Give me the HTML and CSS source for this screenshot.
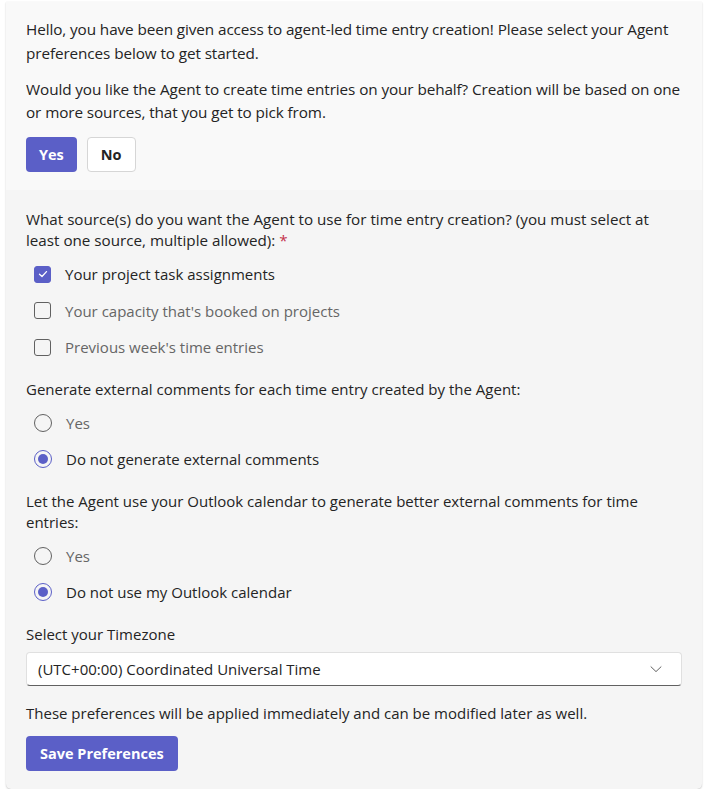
FILE: index.html
```html
<!DOCTYPE html>
<html>
<head>
<meta charset="utf-8">
<link rel="stylesheet" href="styles.css">
</head>
<body>
<div class="card">
  <section class="intro">
    <p class="para">Hello, you have been given access to agent-led time entry creation! Please select your Agent preferences below to get started.</p>
    <p class="para">Would you like the Agent to create time entries on your behalf? Creation will be based on one or more sources, that you get to pick from.</p>
    <div class="toggle">
      <button class="btn primary">Yes</button>
      <button class="btn secondary">No</button>
    </div>
  </section>
  <section class="form">
    <div class="field">
      <div class="label">What source(s) do you want the Agent to use for time entry creation? (you must select at least one source, multiple allowed): <span class="req">*</span></div>
      <div class="opts">
        <div class="opt checked">
          <span class="box on"><svg width="12" height="12" viewBox="0 0 12 12"><path d="M2.5 6.2 L5 8.5 L9.5 3.6" fill="none" stroke="#fff" stroke-width="1.3" stroke-linecap="round" stroke-linejoin="round"/></svg></span>
          <span class="txt">Your project task assignments</span>
        </div>
        <div class="opt">
          <span class="box"></span>
          <span class="txt">Your capacity that's booked on projects</span>
        </div>
        <div class="opt">
          <span class="box"></span>
          <span class="txt">Previous week's time entries</span>
        </div>
      </div>
    </div>
    <div class="field">
      <div class="label">Generate external comments for each time entry created by the Agent:</div>
      <div class="opts">
        <div class="opt">
          <span class="radio"></span>
          <span class="txt">Yes</span>
        </div>
        <div class="opt checked">
          <span class="radio on"></span>
          <span class="txt">Do not generate external comments</span>
        </div>
      </div>
    </div>
    <div class="field">
      <div class="label">Let the Agent use your Outlook calendar to generate better external comments for time entries:</div>
      <div class="opts">
        <div class="opt">
          <span class="radio"></span>
          <span class="txt">Yes</span>
        </div>
        <div class="opt checked">
          <span class="radio on"></span>
          <span class="txt">Do not use my Outlook calendar</span>
        </div>
      </div>
    </div>
    <div class="field tz">
      <div class="label">Select your Timezone</div>
      <div class="select">
        <span>(UTC+00:00) Coordinated Universal Time</span>
        <svg width="14" height="14" viewBox="0 0 14 14"><path d="M2 4.8 L7 9.6 L12 4.8" fill="none" stroke="#616161" stroke-width="1" stroke-linecap="round" stroke-linejoin="round"/></svg>
      </div>
    </div>
    <p class="note">These preferences will be applied immediately and can be modified later as well.</p>
    <div class="actions">
      <button class="btn primary save">Save Preferences</button>
    </div>
  </section>
</div>
</body>
</html>
```
FILE: styles.css
```css
* { box-sizing: border-box; }
html, body { margin: 0; padding: 0; background: #ffffff; }
body {
  font-family: "Open Sans", "Noto Sans", sans-serif;
  font-size: 15px;
  color: #242424;
  padding: 2px 20px 0 6px;
}
.card {
  background: #f5f5f5;
  border-radius: 0 0 5px 5px;
  box-shadow: 0 1px 2px rgba(0,0,0,0.16), 0 0 1px rgba(0,0,0,0.14);
  overflow: hidden;
}
.intro {
  background: #f9f9f9;
  padding: 16px 20px 18px 20px;
}
.para {
  margin: 0 0 12.5px 0;
  line-height: 23.5px;
  font-size: 15.3px;
  letter-spacing: -0.1px;
}
.toggle { display: flex; gap: 10px; }
.btn {
  font-family: inherit;
  font-size: 14.5px;
  font-weight: 700;
  height: 35px;
  border-radius: 4px;
  cursor: pointer;
  padding: 0 13px;
}
.primary { background: #5b5fc7; color: #fff; border: none; }
.secondary { background: #fff; color: #242424; border: 1px solid #d6d6d6; }
.form {
  padding: 19px 20px 18px 20px;
  display: flex;
  flex-direction: column;
}
.field { margin-bottom: 13px; }
.label { line-height: 21px; margin-bottom: 5px; }
.field:first-child .label { font-size: 15.2px; }
.req { color: #c4314b; }
.opts { display: flex; flex-direction: column; }
.opt {
  height: 36.5px;
  display: flex;
  align-items: center;
  padding-left: 8px;
  gap: 14px;
  color: #666666;
}
.opt.checked { color: #242424; }
.box {
  width: 17px; height: 17px;
  border: 1px solid #616161;
  border-radius: 3px;
  display: flex; align-items: center; justify-content: center;
  flex: none;
}
.box.on { background: #5b5fc7; border-color: #5b5fc7; }
.radio {
  width: 18px; height: 18px;
  border: 1px solid #616161;
  border-radius: 50%;
  flex: none;
  display: flex; align-items: center; justify-content: center;
}
.radio.on { border-color: #5b5fc7; }
.radio.on::after {
  content: "";
  width: 10px; height: 10px;
  border-radius: 50%;
  background: #5b5fc7;
}
.tz .label { margin-bottom: 7px; }
.tz { margin-bottom: 17px; }
.select {
  height: 34px;
  background: #fff;
  border-radius: 4px;
  border: 1px solid #e0e0e0;
  border-bottom: 1px solid #616161;
  display: flex;
  align-items: center;
  justify-content: space-between;
  padding: 0 18px 0 11px;
}
.note { margin: 0 0 12px 0; line-height: 21px; }
.actions { display: flex; }
.save { padding: 0 14px; }
```
